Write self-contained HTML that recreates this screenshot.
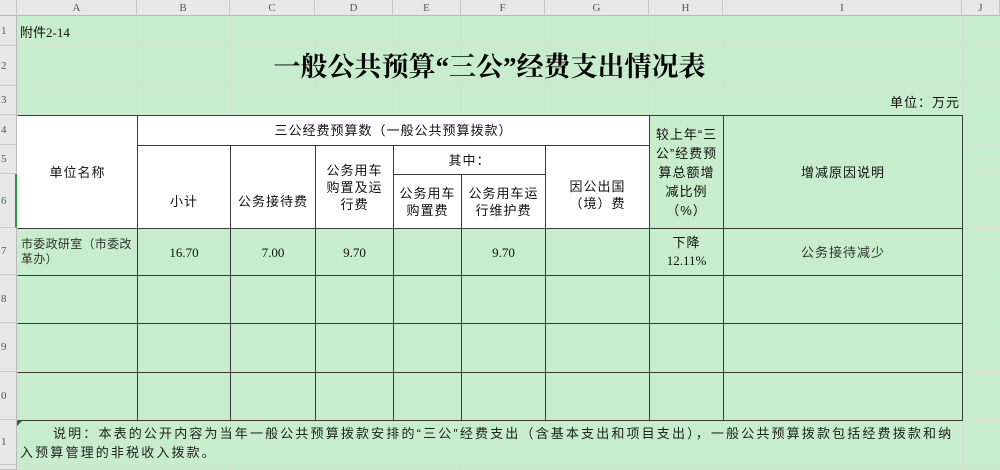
<!DOCTYPE html>
<html><head><meta charset="utf-8"><style>
body{margin:0;width:1000px;height:470px;overflow:hidden;background:#c7edcc;font-family:"Liberation Sans","Noto Sans CJK SC",sans-serif;position:relative}
.a{position:absolute;box-sizing:border-box}
.c{position:absolute;box-sizing:border-box;border:1px solid #3a3a3a;display:flex;align-items:center;justify-content:center;text-align:center;font-size:13px;color:#111;line-height:17px;letter-spacing:1px}
.w{background:#fff}
.g{background:#c7edcc}
.hd{position:absolute;top:0;height:16px;background:#e8e8e8;border-right:1px solid #c8c8c8;border-bottom:1px solid #b8b8b8;box-sizing:border-box;font-size:11px;color:#555;text-align:center;line-height:16px;font-family:"Liberation Serif",serif}
.rh{position:absolute;left:0;width:17px;background:#e8e8e8;border-bottom:1px solid #c8c8c8;border-right:1px solid #b8b8b8;box-sizing:border-box;font-size:11px;color:#555;font-family:"Liberation Serif",serif;display:flex;align-items:center;justify-content:flex-start;padding-left:1px}
.vl{position:absolute;top:16px;height:454px;width:1px;background:#d6dcd6}
.hl{position:absolute;left:17px;width:983px;height:1px;background:#d6dcd6}
.n{font-family:"Liberation Serif",serif;letter-spacing:0}
</style></head><body>
<div class="vl" style="left:137px"></div><div class="vl" style="left:230px"></div><div class="vl" style="left:315px"></div><div class="vl" style="left:393px"></div><div class="vl" style="left:461px"></div><div class="vl" style="left:545px"></div><div class="vl" style="left:649px"></div><div class="vl" style="left:723px"></div><div class="vl" style="left:962px"></div>
<div class="hl" style="top:46px"></div><div class="hl" style="top:86px"></div><div class="hl" style="top:115px"></div><div class="hl" style="top:145px"></div><div class="hl" style="top:174px"></div><div class="hl" style="top:228px"></div><div class="hl" style="top:275px"></div><div class="hl" style="top:323px"></div><div class="hl" style="top:372px"></div><div class="hl" style="top:420px"></div><div class="hl" style="top:465px"></div>
<div class="hd" style="left:0;width:17px"></div>
<div class="hd" style="left:17px;width:120px">A</div>
<div class="hd" style="left:137px;width:93px">B</div>
<div class="hd" style="left:230px;width:85px">C</div>
<div class="hd" style="left:315px;width:78px">D</div>
<div class="hd" style="left:393px;width:68px">E</div>
<div class="hd" style="left:461px;width:84px">F</div>
<div class="hd" style="left:545px;width:104px">G</div>
<div class="hd" style="left:649px;width:74px">H</div>
<div class="hd" style="left:723px;width:239px">I</div>
<div class="hd" style="left:962px;width:38px">J</div>
<div class="rh" style="top:16px;height:30px">1</div>
<div class="rh" style="top:46px;height:40px">2</div>
<div class="rh" style="top:86px;height:29px">3</div>
<div class="rh" style="top:115px;height:30px">4</div>
<div class="rh" style="top:145px;height:29px">5</div>
<div class="rh" style="top:174px;height:54px;color:#3a7a3a;border-right:2px solid #2a9a3a">6</div>
<div class="rh" style="top:228px;height:47px">7</div>
<div class="rh" style="top:275px;height:48px">8</div>
<div class="rh" style="top:323px;height:49px">9</div>
<div class="rh" style="top:372px;height:48px">0</div>
<div class="rh" style="top:420px;height:45px">1</div>
<div class="rh" style="top:465px;height:5px"></div>
<div class="a" style="left:20px;top:22px;font-size:13px;color:#111">附件<span class="n">2-14</span></div>
<div class="a" style="left:17px;top:47px;width:945px;height:40px;text-align:center;line-height:40px;font-size:27px;font-weight:bold;font-family:'Liberation Serif','Noto Serif CJK SC',serif;color:#000">一般公共预算“三公”经费支出情况表</div>
<div class="a" style="left:800px;top:92px;width:160px;text-align:right;font-size:13px;letter-spacing:1px;color:#111">单位：万元</div>
<div class="c w" style="left:17px;top:115px;width:121px;height:114px;border-left-color:#fff">单位名称</div>
<div class="c w" style="left:137px;top:115px;width:513px;height:31px">三公经费预算数（一般公共预算拨款）</div>
<div class="c w" style="left:137px;top:145px;width:94px;height:84px;padding-top:28px">小计</div>
<div class="c w" style="left:230px;top:145px;width:86px;height:84px;padding-top:28px">公务接待费</div>
<div class="c w" style="left:315px;top:145px;width:79px;height:84px;padding:0 4px">公务用车购置及运行费</div>
<div class="c w" style="left:393px;top:145px;width:153px;height:30px">其中：</div>
<div class="c w" style="left:393px;top:174px;width:69px;height:55px">公务用车购置费</div>
<div class="c w" style="left:461px;top:174px;width:85px;height:55px;padding:0 1px">公务用车运行维护费</div>
<div class="c w" style="left:545px;top:145px;width:105px;height:84px;padding:16px 12px 0">因公出国（境）费</div>
<div class="c g" style="left:649px;top:115px;width:75px;height:114px;padding:0 2px;line-height:19px">较上年“三公”经费预算总额增减比例（%）</div>
<div class="c g" style="left:723px;top:115px;width:240px;height:114px">增减原因说明</div>
<div class="c g" style="left:17px;top:228px;width:121px;height:48px;justify-content:flex-start;text-align:left;padding-left:3px;font-size:12px;line-height:15px;color:#333;border-left-color:#c7edcc;letter-spacing:0.3px">市委政研室（市委改革办）</div>
<div class="c g n" style="left:137px;top:228px;width:94px;height:48px">16.70</div>
<div class="c g n" style="left:230px;top:228px;width:86px;height:48px">7.00</div>
<div class="c g n" style="left:315px;top:228px;width:79px;height:48px">9.70</div>
<div class="c g" style="left:393px;top:228px;width:69px;height:48px"></div>
<div class="c g n" style="left:461px;top:228px;width:85px;height:48px">9.70</div>
<div class="c g" style="left:545px;top:228px;width:105px;height:48px"></div>
<div class="c g" style="left:649px;top:228px;width:75px;height:48px;line-height:18px"><span>下降<br><span class="n">12.11%</span></span></div>
<div class="c g" style="left:723px;top:228px;width:240px;height:48px;color:#333">公务接待减少</div>
<div class="c g" style="left:17px;top:275px;width:121px;height:49px;border-left-color:#c7edcc"></div><div class="c g" style="left:137px;top:275px;width:94px;height:49px"></div><div class="c g" style="left:230px;top:275px;width:86px;height:49px"></div><div class="c g" style="left:315px;top:275px;width:79px;height:49px"></div><div class="c g" style="left:393px;top:275px;width:69px;height:49px"></div><div class="c g" style="left:461px;top:275px;width:85px;height:49px"></div><div class="c g" style="left:545px;top:275px;width:105px;height:49px"></div><div class="c g" style="left:649px;top:275px;width:75px;height:49px"></div><div class="c g" style="left:723px;top:275px;width:240px;height:49px"></div>
<div class="c g" style="left:17px;top:323px;width:121px;height:50px;border-left-color:#c7edcc"></div><div class="c g" style="left:137px;top:323px;width:94px;height:50px"></div><div class="c g" style="left:230px;top:323px;width:86px;height:50px"></div><div class="c g" style="left:315px;top:323px;width:79px;height:50px"></div><div class="c g" style="left:393px;top:323px;width:69px;height:50px"></div><div class="c g" style="left:461px;top:323px;width:85px;height:50px"></div><div class="c g" style="left:545px;top:323px;width:105px;height:50px"></div><div class="c g" style="left:649px;top:323px;width:75px;height:50px"></div><div class="c g" style="left:723px;top:323px;width:240px;height:50px"></div>
<div class="c g" style="left:17px;top:372px;width:121px;height:49px;border-left-color:#c7edcc"></div><div class="c g" style="left:137px;top:372px;width:94px;height:49px"></div><div class="c g" style="left:230px;top:372px;width:86px;height:49px"></div><div class="c g" style="left:315px;top:372px;width:79px;height:49px"></div><div class="c g" style="left:393px;top:372px;width:69px;height:49px"></div><div class="c g" style="left:461px;top:372px;width:85px;height:49px"></div><div class="c g" style="left:545px;top:372px;width:105px;height:49px"></div><div class="c g" style="left:649px;top:372px;width:75px;height:49px"></div><div class="c g" style="left:723px;top:372px;width:240px;height:49px"></div>
<div class="a" style="left:17px;top:421px;width:945px;height:44px;background:#c7edcc"></div>
<div class="a" style="left:17px;top:421px;width:0;height:0;border-top:5px solid #1a7a2a;border-right:5px solid transparent"></div>
<div class="a" style="left:20px;top:424px;width:945px;font-size:13px;line-height:19px;color:#222;text-indent:33px;letter-spacing:2.15px;white-space:nowrap">说明：本表的公开内容为当年一般公共预算拨款安排的“三公”经费支出（含基本支出和项目支出），一般公共预算拨款包括经费拨款和纳<br>入预算管理的非税收入拨款。</div>
</body></html>
